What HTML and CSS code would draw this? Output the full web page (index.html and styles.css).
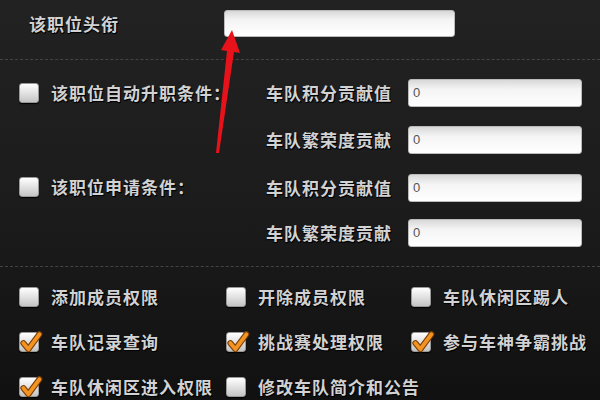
FILE: index.html
```html
<!DOCTYPE html>
<html lang="zh-CN">
<head>
<meta charset="utf-8">
<title>职位设置</title>
<link rel="stylesheet" href="styles.css">
</head>
<body>
<div class="panel">
  <div class="title-row">
    <span class="label title-label">该职位头衔</span>
    <div class="input wide"></div>
  </div>

  <div class="cond-section">
    <div class="group g1">
      <div class="left">
        <span class="cb"></span>
        <span class="label">该职位自动升职条件：</span>
      </div>
      <div class="fields">
        <div class="field"><span class="label flabel">车队积分贡献值</span><div class="input">0</div></div>
        <div class="field"><span class="label flabel">车队繁荣度贡献</span><div class="input">0</div></div>
      </div>
    </div>
    <div class="group g2">
      <div class="left">
        <span class="cb"></span>
        <span class="label">该职位申请条件：</span>
      </div>
      <div class="fields">
        <div class="field"><span class="label flabel">车队积分贡献值</span><div class="input">0</div></div>
        <div class="field"><span class="label flabel">车队繁荣度贡献</span><div class="input">0</div></div>
      </div>
    </div>
  </div>

  <div class="perms">
    <div class="perm"><span class="cb"></span><span class="label">添加成员权限</span></div>
    <div class="perm"><span class="cb"></span><span class="label">开除成员权限</span></div>
    <div class="perm"><span class="cb"></span><span class="label">车队休闲区踢人</span></div>
    <div class="perm"><span class="cb on"><svg viewBox="0 0 20 20"><path class="ck-o" d="M4 11 L8.5 16.5 L18.5 3"/><path class="ck" d="M4 11 L8.5 16.5 L18.5 3"/></svg></span><span class="label">车队记录查询</span></div>
    <div class="perm"><span class="cb on"><svg viewBox="0 0 20 20"><path class="ck-o" d="M4 11 L8.5 16.5 L18.5 3"/><path class="ck" d="M4 11 L8.5 16.5 L18.5 3"/></svg></span><span class="label">挑战赛处理权限</span></div>
    <div class="perm"><span class="cb on"><svg viewBox="0 0 20 20"><path class="ck-o" d="M4 11 L8.5 16.5 L18.5 3"/><path class="ck" d="M4 11 L8.5 16.5 L18.5 3"/></svg></span><span class="label">参与车神争霸挑战</span></div>
    <div class="perm"><span class="cb on"><svg viewBox="0 0 20 20"><path class="ck-o" d="M4 11 L8.5 16.5 L18.5 3"/><path class="ck" d="M4 11 L8.5 16.5 L18.5 3"/></svg></span><span class="label">车队休闲区进入权限</span></div>
    <div class="perm"><span class="cb"></span><span class="label">修改车队简介和公告</span></div>
  </div>
</div>

<svg class="arrow" viewBox="0 0 600 400" width="600" height="400">
  <polygon points="232,30 240,53 234,52 219,153 216,153 227,51 221,50" fill="#e8121a"/>
</svg>
</body>
</html>
```

FILE: styles.css
```css
html, body {
  margin: 0;
  padding: 0;
}
body {
  width: 600px;
  height: 400px;
  overflow: hidden;
  position: relative;
  background: linear-gradient(to bottom, #222222 0%, #1c1c1c 50%, #111111 100%);
  font-family: "Noto Sans CJK SC", "Noto Sans", sans-serif;
}
.panel {
  width: 600px;
}
.label {
  font-size: 17px;
  font-weight: bold;
  letter-spacing: 1px;
  color: #d2d2d2;
  text-shadow: 0 1px 1px #000, 1px 1px 0 #000;
  white-space: nowrap;
  line-height: 20px;
}
.title-row {
  display: flex;
  align-items: flex-start;
  padding: 10px 0 0 29px;
  height: 60px;
  border-bottom: 1px dashed #444;
  box-sizing: border-box;
}
.title-label {
  width: 195px;
  margin-top: 4px;
}
.input {
  box-sizing: border-box;
  width: 174px;
  height: 28px;
  border-radius: 3px;
  background: linear-gradient(to bottom, #d8d8d8 0%, #f4f4f4 35%, #ffffff 100%);
  border: 1px solid #bbb;
  font-family: "Liberation Sans", Arial, sans-serif;
  font-size: 13px;
  color: #555;
  padding-left: 4px;
  line-height: 26px;
  letter-spacing: 0;
}
.input.wide {
  width: 231px;
  height: 27px;
}
.cond-section {
  padding: 19px 0 19px 0;
  border-bottom: 1px dashed #444;
  display: flex;
  flex-direction: column;
  gap: 20px;
}
.group {
  display: flex;
  align-items: flex-start;
}
.left {
  width: 266px;
  height: 28px;
  display: flex;
  align-items: center;
  padding-left: 19px;
  box-sizing: border-box;
  gap: 12px;
}
.g2 .left {
  margin-top: -1px;
}
.fields {
  display: flex;
  flex-direction: column;
}
.g1 .fields { gap: 19px; }
.g2 .fields { gap: 17px; }
.field {
  display: flex;
  align-items: center;
}
.flabel {
  width: 142px;
}
.cb {
  position: relative;
  flex: none;
  width: 20px;
  height: 20px;
  box-sizing: border-box;
  border-radius: 3px;
  border: 1px solid #999;
  background: linear-gradient(to bottom, #ffffff 0%, #dcdcdc 60%, #c4c4c4 100%);
  box-shadow: 0 1px 1px #000;
}
.cb svg {
  position: absolute;
  left: -1px;
  top: -2px;
  width: 22px;
  height: 22px;
  overflow: visible;
}
.ck-o {
  fill: none;
  stroke: #7a3e05;
  stroke-width: 5.5;
  stroke-linecap: round;
  stroke-linejoin: round;
}
.ck {
  fill: none;
  stroke: #f39322;
  stroke-width: 3.5;
  stroke-linecap: round;
  stroke-linejoin: round;
}
.perms {
  display: grid;
  grid-template-columns: 207px 185px auto;
  grid-auto-rows: 45px;
  padding: 7px 0 0 19px;
}
.perm {
  display: flex;
  align-items: center;
  gap: 12px;
}
.arrow {
  position: absolute;
  left: 0;
  top: 0;
  pointer-events: none;
}
```
